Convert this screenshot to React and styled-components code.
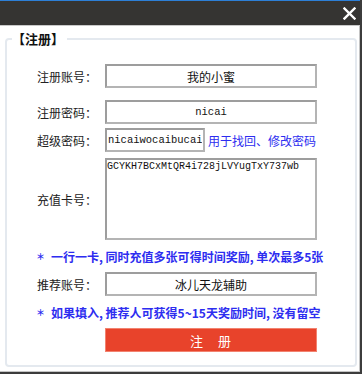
import React from "react";
import styled, { createGlobalStyle } from "styled-components";

const Global = createGlobalStyle`
  html, body {
    margin: 0;
    padding: 0;
    background: #ffffff;
    overflow: hidden;
  }
  * {
    box-sizing: border-box;
  }
`;

const CJK = `"Noto Sans CJK SC", "Noto Sans", sans-serif`;
const MONO = `"Liberation Mono", "DejaVu Sans Mono", monospace`;

export default function App() {
  return (
    <>
      <Global />
      <Window>
        <TitleBar>
          <CloseButton aria-label="close">
            <svg width="13" height="13" viewBox="0 0 13 13">
              <path d="M1.5 1.5 L11.5 11.5 M11.5 1.5 L1.5 11.5" stroke="#ffffff" strokeWidth="2.4" strokeLinecap="square" />
            </svg>
          </CloseButton>
        </TitleBar>
        <Body>
          <Group>
            <Legend>【注册】</Legend>
            <Form>
              <Row $mt={0}>
                <Label>注册账号：</Label>
                <Field defaultValue="我的小蜜" />
              </Row>

              <Row $mt={12}>
                <Label>注册密码：</Label>
                <Field $mono defaultValue="nicai" />
              </Row>

              <Row $mt={4}>
                <Label>超级密码：</Label>
                <Field $mono $left $width={100} defaultValue="nicaiwocaibucai" />
                <Hint>用于找回、修改密码</Hint>
              </Row>

              <Row $mt={6}>
                <Label>充值卡号：</Label>
                <CardBox defaultValue="GCYKH7BCxMtQR4i728jLVYugTxY737wb" />
              </Row>

              <Note $mt={9}>
                <Star>＊</Star>一行一卡, 同时充值多张可得时间奖励, 单次最多5张
              </Note>

              <Row $mt={7}>
                <Label>推荐账号：</Label>
                <Field defaultValue="冰儿天龙辅助" />
              </Row>

              <Note $mt={9}>
                <Star>＊</Star>如果填入, 推荐人可获得5~15天奖励时间, 没有留空
              </Note>

              <Row $mt={7}>
                <Spacer />
                <SubmitButton>注　册</SubmitButton>
              </Row>
            </Form>
          </Group>
        </Body>
      </Window>
    </>
  );
}

const Window = styled.div`
  width: 362px;
  height: 374px;
  display: flex;
  flex-direction: column;
  background: #ffffff;
  border-right: 2px solid #3c3c3c;
  border-bottom: 2px solid #3c3c3c;
`;

const TitleBar = styled.div`
  height: 26px;
  flex: none;
  background: #353432;
  border-top: 1px solid #2d7fd6;
  border-bottom: 1px solid #c9c9c9;
  display: flex;
  justify-content: flex-end;
  align-items: center;
  padding-right: 3px;
`;

const CloseButton = styled.div`
  width: 16px;
  height: 16px;
  display: flex;
  align-items: center;
  justify-content: center;
  margin-top: 1px;
`;

const Body = styled.div`
  flex: 1;
  border-right: 1px solid #c4c4c4;
  border-bottom: 1px solid #c4c4c4;
  padding: 5px 0 0 5px;
`;

const Group = styled.fieldset`
  width: 352px;
  height: 336px;
  margin: 0;
  padding: 17px 0 0 0;
  border: 2px solid #e4e9ef;
  border-radius: 4px;
`;

const Legend = styled.legend`
  margin-left: 5px;
  padding: 0 3px 0 0;
  font-family: ${CJK};
  font-size: 13px;
  font-weight: bold;
  line-height: 16px;
  color: #111111;
`;

const Form = styled.div`
  display: flex;
  flex-direction: column;
  padding-left: 27px;
`;

const Row = styled.div`
  display: flex;
  align-items: center;
  margin-top: ${(p) => p.$mt}px;
`;

const Label = styled.div`
  width: 63px;
  margin-right: 8px;
  text-align: right;
  font-family: ${CJK};
  font-size: 12px;
  color: #222222;
  white-space: nowrap;
`;

const Spacer = styled.div`
  width: 71px;
`;

const Field = styled.input`
  width: ${(p) => p.$width || 212}px;
  height: 24px;
  margin: 0;
  padding: 0 ${(p) => (p.$left ? 1 : 4)}px;
  border: 2px solid #9d9d9d;
  border-bottom-color: #b4b4b4;
  border-right-color: #b4b4b4;
  background: #ffffff;
  outline: none;
  text-align: ${(p) => (p.$left ? "left" : "center")};
  font-family: ${(p) => (p.$mono ? MONO : CJK)};
  font-size: ${(p) => (p.$mono ? "10.5px" : "12px")};
  color: #111111;
`;

const Hint = styled.span`
  margin-left: 3px;
  font-family: ${CJK};
  font-size: 12px;
  color: #2d2df0;
  white-space: nowrap;
`;

const CardBox = styled.textarea`
  width: 212px;
  height: 82px;
  margin: 0;
  padding: 0;
  resize: none;
  border: 2px solid #9d9d9d;
  border-bottom-color: #b4b4b4;
  border-right-color: #b4b4b4;
  outline: none;
  font-family: ${MONO};
  font-size: 10px;
  line-height: 14px;
  color: #111111;
  overflow: hidden;
`;

const Note = styled.div`
  margin-top: ${(p) => p.$mt}px;
  height: 16px;
  line-height: 16px;
  font-family: ${CJK};
  font-size: 12px;
  font-weight: bold;
  color: #2d2df0;
  white-space: nowrap;
`;

const Star = styled.span`
  display: inline-block;
  width: 17px;
  padding-left: 2px;
  font-size: 9px;
  vertical-align: top;
`;

const SubmitButton = styled.button`
  width: 212px;
  height: 24px;
  margin: 0;
  padding: 0;
  border: 1px solid #f2826f;
  background: #e8432b;
  color: #ffffff;
  font-family: ${CJK};
  font-size: 13px;
  letter-spacing: 1px;
`;
